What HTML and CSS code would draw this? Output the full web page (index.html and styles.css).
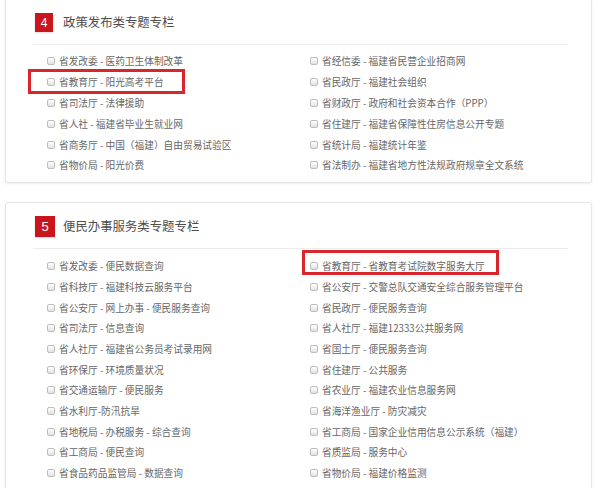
FILE: index.html
```html
<!DOCTYPE html>
<html lang="zh-CN">
<head>
<meta charset="utf-8">
<title>专题专栏</title>
<link rel="stylesheet" href="styles.css">
</head>
<body>
<div class="page">
  <section class="card card-first">
    <div class="card-inner">
      <div class="head">
        <span class="badge">4</span>
        <h2 class="title">政策发布类专题专栏</h2>
      </div>
      <ul class="list">
        <li class="item"><span class="cb"></span><span>省发改委 - 医药卫生体制改革</span></li>
        <li class="item"><span class="cb"></span><span>省经信委 - 福建省民营企业招商网</span></li>
        <li class="item"><span class="cb"></span><span>省教育厅 - 阳光高考平台</span><span class="mark mark-a"></span></li>
        <li class="item"><span class="cb"></span><span>省民政厅 - 福建社会组织</span></li>
        <li class="item"><span class="cb"></span><span>省司法厅 - 法律援助</span></li>
        <li class="item"><span class="cb"></span><span>省财政厅 - 政府和社会资本合作（PPP）</span></li>
        <li class="item"><span class="cb"></span><span>省人社 - 福建省毕业生就业网</span></li>
        <li class="item"><span class="cb"></span><span>省住建厅 - 福建省保障性住房信息公开专题</span></li>
        <li class="item"><span class="cb"></span><span>省商务厅 - 中国（福建）自由贸易试验区</span></li>
        <li class="item"><span class="cb"></span><span>省统计局 - 福建统计年鉴</span></li>
        <li class="item"><span class="cb"></span><span>省物价局 - 阳光价费</span></li>
        <li class="item"><span class="cb"></span><span>省法制办 - 福建省地方性法规政府规章全文系统</span></li>
      </ul>
    </div>
  </section>

  <section class="card card-second">
    <div class="card-inner">
      <div class="head head-lg">
        <span class="badge badge-lg">5</span>
        <h2 class="title">便民办事服务类专题专栏</h2>
      </div>
      <ul class="list list-2">
        <li class="item"><span class="cb"></span><span>省发改委 - 便民数据查询</span></li>
        <li class="item"><span class="cb"></span><span>省教育厅 - 省教育考试院数字服务大厅</span><span class="mark mark-b"></span></li>
        <li class="item"><span class="cb"></span><span>省科技厅 - 福建科技云服务平台</span></li>
        <li class="item"><span class="cb"></span><span>省公安厅 - 交警总队交通安全综合服务管理平台</span></li>
        <li class="item"><span class="cb"></span><span>省公安厅 - 网上办事 - 便民服务查询</span></li>
        <li class="item"><span class="cb"></span><span>省民政厅 - 便民服务查询</span></li>
        <li class="item"><span class="cb"></span><span>省司法厅 - 信息查询</span></li>
        <li class="item"><span class="cb"></span><span>省人社厅 - 福建12333公共服务网</span></li>
        <li class="item"><span class="cb"></span><span>省人社厅 - 福建省公务员考试录用网</span></li>
        <li class="item"><span class="cb"></span><span>省国土厅 - 便民服务查询</span></li>
        <li class="item"><span class="cb"></span><span>省环保厅 - 环境质量状况</span></li>
        <li class="item"><span class="cb"></span><span>省住建厅 - 公共服务</span></li>
        <li class="item"><span class="cb"></span><span>省交通运输厅 - 便民服务</span></li>
        <li class="item"><span class="cb"></span><span>省农业厅 - 福建农业信息服务网</span></li>
        <li class="item"><span class="cb"></span><span>省水利厅-防汛抗旱</span></li>
        <li class="item"><span class="cb"></span><span>省海洋渔业厅 - 防灾减灾</span></li>
        <li class="item"><span class="cb"></span><span>省地税局 - 办税服务 - 综合查询</span></li>
        <li class="item"><span class="cb"></span><span>省工商局 - 国家企业信用信息公示系统（福建）</span></li>
        <li class="item"><span class="cb"></span><span>省工商局 - 便民查询</span></li>
        <li class="item"><span class="cb"></span><span>省质监局 - 服务中心</span></li>
        <li class="item"><span class="cb"></span><span>省食品药品监管局 - 数据查询</span></li>
        <li class="item"><span class="cb"></span><span>省物价局 - 福建价格监测</span></li>
      </ul>
    </div>
  </section>
</div>
</body>
</html>
```

FILE: styles.css
```css
html, body {
  margin: 0;
  padding: 0;
  background: #ffffff;
}

body {
  font-family: "Microsoft YaHei", "Noto Sans CJK SC", "Noto Sans", sans-serif;
  color: #666666;
  overflow: hidden;
}

.page {
  padding: 0 8px 0 5px;
  display: flex;
  flex-direction: column;
  gap: 19px;
}

.card {
  width: 587px;
  box-sizing: border-box;
  background: #ffffff;
  border: 1px solid #e6e6e6;
  border-radius: 3px;
  box-shadow: 0 1px 3px rgba(0, 0, 0, 0.07);
}

.card-first {
  border-top: none;
  border-radius: 0 0 3px 3px;
  padding-top: 13px;
  padding-bottom: 6px;
}

.card-second {
  padding-top: 13px;
  padding-bottom: 10px;
}

.card-inner {
  margin: 0 23px 0 27px;
}

.head {
  display: flex;
  align-items: center;
  gap: 10px;
  padding-left: 2px;
  padding-bottom: 12px;
  border-bottom: 1px solid #ececec;
}

.head-lg {
  gap: 8px;
  padding-bottom: 11px;
}

.badge {
  width: 18px;
  height: 19px;
  background: #c9161c;
  color: #ffffff;
  font-family: "Liberation Sans", Arial, sans-serif;
  font-size: 12px;
  display: flex;
  align-items: center;
  justify-content: center;
  box-shadow: 0 1px 2px rgba(0, 0, 0, 0.15);
}

.badge-lg {
  width: 20px;
  height: 21px;
  font-size: 13px;
}

.title {
  margin: 0;
  font-size: 12.4px;
  font-weight: normal;
  color: #4d4d4d;
  line-height: 19px;
}

.list {
  list-style: none;
  margin: 0;
  padding: 6px 0 0 14px;
  display: grid;
  grid-template-columns: 263px 1fr;
  grid-auto-rows: 20.8px;
}

.list-2 {
  padding-top: 7px;
  grid-auto-rows: 20.7px;
}

.item {
  position: relative;
  display: flex;
  align-items: center;
  gap: 4px;
  font-size: 9.7px;
  line-height: 14px;
  white-space: nowrap;
}

.cb {
  flex: none;
  width: 6px;
  height: 6px;
  border: 1px solid #bdbdbd;
  border-radius: 2px;
  background: linear-gradient(#ffffff, #e2e2e2);
}

.mark {
  position: absolute;
  box-sizing: border-box;
  border: 3px solid #d9262c;
  height: 25px;
}

.mark-a {
  left: -19px;
  top: -2.5px;
  width: 157px;
}

.mark-b {
  left: -8px;
  top: -5.6px;
  width: 197px;
}
```
